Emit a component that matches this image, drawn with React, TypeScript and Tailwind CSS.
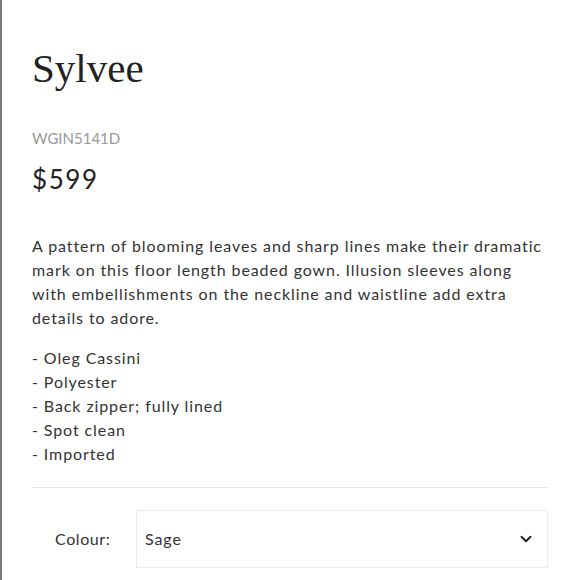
import { ChevronDown } from "lucide-react";

const bullets = [
  "Oleg Cassini",
  "Polyester",
  "Back zipper; fully lined",
  "Spot clean",
  "Imported",
];

const lines = [
  "A pattern of blooming leaves and sharp lines make their dramatic",
  "mark on this floor length beaded gown. Illusion sleeves along",
  "with embellishments on the neckline and waistline add extra",
  "details to adore.",
];

export default function App() {
  return (
    <div className="w-[580px] h-[580px] overflow-hidden bg-white border-l-2 border-[#7a7a7a] font-['Lato','Open_Sans',sans-serif] text-[#333]">
      <div className="pl-[30px] pr-[32px] pt-[44px]">
        <h1 className="font-['Liberation_Serif',serif] text-[41px] leading-[48px] text-[#222]">
          Sylvee
        </h1>
        <p className="mt-[36px] text-[15px] leading-[20px] text-[#999]">
          WGIN5141D
        </p>
        <p className="mt-[16px] text-[26px] leading-[30px] text-[#222] tracking-[1.6px]">
          $599
        </p>
        <p className="mt-[40px] text-[16px] leading-[24px] tracking-[0.9px]">
          {lines.map((l) => (
            <span key={l} className="block whitespace-nowrap">
              {l}
            </span>
          ))}
        </p>
        <ul className="mt-[16px] text-[16px] leading-[24px] tracking-[0.9px]">
          {bullets.map((b) => (
            <li key={b}>- {b}</li>
          ))}
        </ul>
        <div className="mt-[21px] border-t border-[#eaeaea]" />
        <div className="mt-[22px] flex items-center">
          <span className="w-[104px] pl-[23px] text-[16px] tracking-[0.6px]">
            Colour:
          </span>
          <div className="flex-1 h-[58px] border border-[#ececec] flex items-center justify-between pl-[8px] pr-[12px]">
            <span className="text-[16px] tracking-[0.9px]">Sage</span>
            <ChevronDown size={18} strokeWidth={2.5} className="text-[#222]" />
          </div>
        </div>
      </div>
    </div>
  );
}
